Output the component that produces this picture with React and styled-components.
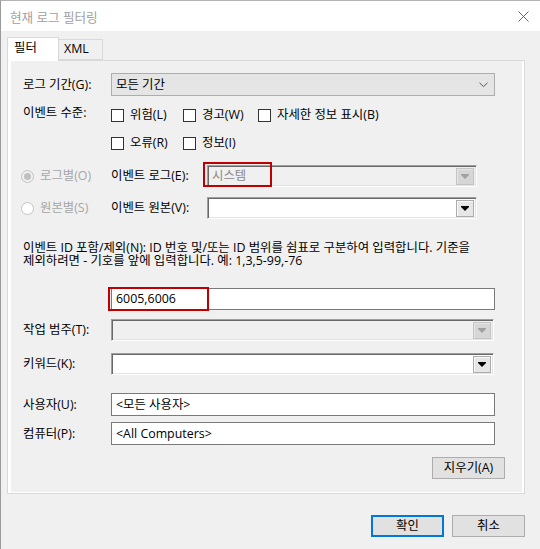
import React from "react";
import styled, { createGlobalStyle, css } from "styled-components";

const GlobalStyle = createGlobalStyle`
  html, body {
    margin: 0;
    padding: 0;
    background: #f0f0f0;
  }
  body {
    font-family: "Open Sans", "Noto Sans CJK KR", sans-serif;
    font-size: 12.4px;
    color: #000;
  }
  * {
    box-sizing: border-box;
  }
`;

const Window = styled.div`
  width: 540px;
  height: 549px;
  border-left: 1px solid #9a9a9a;
  border-top: 1px solid #b4b4b4;
  background: #f0f0f0;
  display: flex;
  flex-direction: column;
  overflow: hidden;
`;

const TitleBar = styled.div`
  height: 30px;
  background: #fff;
  display: flex;
  align-items: center;
  justify-content: space-between;
  padding: 0 8px 0 9px;
  color: #a0a0a0;
  font-size: 12.6px;
`;

const CloseButton = styled.div`
  width: 18px;
  height: 18px;
  display: flex;
  align-items: center;
  justify-content: center;
  svg {
    display: block;
  }
`;

const Body = styled.div`
  flex: 1;
  display: flex;
  flex-direction: column;
  padding: 6px 0 0 6px;
`;

const TabStrip = styled.div`
  display: flex;
  align-items: flex-end;
  height: 23px;
  position: relative;
  z-index: 1;
`;

const Tab = styled.div`
  height: ${({ $active }) => ($active ? "24px" : "21px")};
  width: ${({ $w }) => $w}px;
  border: 1px solid #d9d9d9;
  border-bottom: ${({ $active }) => ($active ? "none" : "1px solid #d9d9d9")};
  background: ${({ $active }) => ($active ? "#fff" : "#f0f0f0")};
  margin-bottom: ${({ $active }) => ($active ? "-1px" : "0")};
  margin-left: ${({ $active }) => ($active ? "0" : "-1px")};
  padding: ${({ $active }) => ($active ? "2px 0 0 6px" : "1px 0 0 5px")};
  line-height: 16px;
`;

const Panel = styled.div`
  width: 518px;
  height: 434px;
  border: 1px solid #d9d9d9;
  background: #fff;
  padding: 0 2px 1px 3px;
`;

const Page = styled.div`
  height: 100%;
  background: #f0f0f0;
  display: flex;
  flex-direction: column;
  padding: 12px 0 0 12px;
`;

const Row = styled.div`
  display: flex;
  align-items: ${({ $align }) => $align || "center"};
  margin-top: ${({ $mt }) => $mt || 0}px;
`;

const Label = styled.div`
  width: ${({ $w }) => $w || 88}px;
  flex-shrink: 0;
  line-height: 16px;
  white-space: nowrap;
  color: ${({ $disabled }) => ($disabled ? "#a6a6a6" : "#000")};
`;

const SelectBox = styled.div`
  width: 384px;
  height: 23px;
  background: #e5e5e5;
  border: 1px solid #adadad;
  display: flex;
  align-items: center;
  justify-content: space-between;
  padding: 0 6px 0 4px;
  line-height: 16px;
`;

const sunken = css`
  border: 1px solid;
  border-color: #a0a0a0 #ffffff #ffffff #a0a0a0;
  box-shadow: inset 1px 1px 0 #696969, inset -1px -1px 0 #e3e3e3;
`;

const Combo = styled.div`
  position: relative;
  width: ${({ $w }) => $w}px;
  height: 22px;
  ${sunken};
  background: ${({ $disabled }) => ($disabled ? "#f0f0f0" : "#fff")};
  display: flex;
  align-items: center;
  justify-content: space-between;
  padding: 0 2px 0 4px;
  line-height: 16px;
  color: ${({ $disabled }) => ($disabled ? "#8a8a8a" : "#000")};
`;

const DropButton = styled.div`
  width: 18px;
  height: 17px;
  border: 1px solid ${({ $disabled }) => ($disabled ? "#c4c4c4" : "#acacac")};
  background: ${({ $disabled }) => ($disabled ? "#d6d6d6" : "#e6e6e6")};
  box-shadow: inset 1px 1px 0 ${({ $disabled }) => ($disabled ? "#e4e4e4" : "#f8f8f8")};
  display: flex;
  align-items: center;
  justify-content: center;
  padding-top: 1px;
`;

const Arrow = styled.div`
  width: 0;
  height: 0;
  border-left: 4px solid transparent;
  border-right: 4px solid transparent;
  border-top: 4px solid ${({ $disabled }) => ($disabled ? "#a0a0a0" : "#000")};
  position: relative;
  &::before {
    content: "";
    position: absolute;
    left: -4px;
    top: -5px;
    width: 8px;
    height: 1px;
    background: ${({ $disabled }) => ($disabled ? "#a0a0a0" : "#000")};
  }
`;

const Highlight = styled.div`
  position: absolute;
  left: -5px;
  top: -4px;
  width: ${({ $w }) => $w}px;
  height: ${({ $h }) => $h}px;
  border: 2px solid #c00000;
  pointer-events: none;
`;

const TextBox = styled.div`
  position: relative;
  width: 384px;
  height: ${({ $h }) => $h || 23}px;
  background: #fff;
  border: 1px solid #7a7a7a;
  display: flex;
  align-items: center;
  padding: 0 4px;
  line-height: 16px;
`;

const LevelBlock = styled.div`
  display: grid;
  grid-template-columns: 72px 75px auto;
  row-gap: 8px;
`;

const CheckItem = styled.label`
  display: flex;
  align-items: center;
  height: 20px;
  gap: 6px;
  line-height: 16px;
  white-space: nowrap;
`;

const CheckBox = styled.span`
  width: 13px;
  height: 13px;
  border: 1px solid #333;
  background: #fff;
  flex-shrink: 0;
`;

const RadioCell = styled.div`
  width: 100px;
  margin-left: -12px;
  display: flex;
  align-items: center;
  gap: 6px;
  padding-left: 10px;
  flex-shrink: 0;
`;

const Radio = styled.span`
  width: 13px;
  height: 13px;
  border-radius: 50%;
  border: 1px solid #c4c4c4;
  background: ${({ $checked }) => ($checked ? "#f0f0f0" : "#fff")};
  display: flex;
  align-items: center;
  justify-content: center;
  flex-shrink: 0;
  &::after {
    content: "";
    display: ${({ $checked }) => ($checked ? "block" : "none")};
    width: 7px;
    height: 7px;
    border-radius: 50%;
    background: #c0c0c0;
  }
`;

const Description = styled.div`
  margin-top: ${({ $mt }) => $mt}px;
  width: 490px;
  white-space: nowrap;
`;

const DescLine = styled.div`
  height: 13px;
  line-height: 13px;
`;

const Button = styled.div`
  width: 73px;
  height: 22px;
  background: #e1e1e1;
  border: ${({ $primary }) => ($primary ? "2px solid #0078d7" : "1px solid #adadad")};
  display: flex;
  align-items: center;
  justify-content: center;
  line-height: 16px;
`;

const ClearRow = styled.div`
  display: flex;
  justify-content: flex-end;
  padding-right: 17px;
  margin-top: 12px;
`;

const Footer = styled.div`
  display: flex;
  justify-content: flex-end;
  gap: 8px;
  padding-right: 15px;
  margin-top: 21px;
`;

const Chevron = () => (
  <svg width="9" height="6" viewBox="0 0 9 6">
    <path d="M0.5 0.8 L4.5 4.6 L8.5 0.8" fill="none" stroke="#444" strokeWidth="0.9" />
  </svg>
);

export default function App() {
  return (
    <>
      <GlobalStyle />
      <Window>
        <TitleBar>
          <span>현재 로그 필터링</span>
          <CloseButton>
            <svg width="11" height="11" viewBox="0 0 11 11">
              <path d="M0.5 0.5 L10.5 10.5 M10.5 0.5 L0.5 10.5" stroke="#666" strokeWidth="1" />
            </svg>
          </CloseButton>
        </TitleBar>
        <Body>
          <TabStrip>
            <Tab $active $w={52}>필터</Tab>
            <Tab $w={45}>XML</Tab>
          </TabStrip>
          <Panel>
            <Page>
              <Row>
                <Label>로그 기간(G):</Label>
                <SelectBox>
                  <span>모든 기간</span>
                  <Chevron />
                </SelectBox>
              </Row>

              <Row $align="flex-start" $mt={9}>
                <Label>이벤트 수준:</Label>
                <LevelBlock>
                  <CheckItem><CheckBox />위험(L)</CheckItem>
                  <CheckItem><CheckBox />경고(W)</CheckItem>
                  <CheckItem><CheckBox />자세한 정보 표시(B)</CheckItem>
                  <CheckItem><CheckBox />오류(R)</CheckItem>
                  <CheckItem><CheckBox />정보(I)</CheckItem>
                </LevelBlock>
              </Row>

              <Row $mt={12}>
                <RadioCell>
                  <Radio $checked />
                  <Label $disabled $w={60}>로그별(O)</Label>
                </RadioCell>
                <Label $w={96}>이벤트 로그(E):</Label>
                <Combo $w={270} $disabled>
                  <span>시스템</span>
                  <DropButton $disabled>
                    <Arrow $disabled />
                  </DropButton>
                  <Highlight $w={69} $h={25} />
                </Combo>
              </Row>

              <Row $mt={10}>
                <RadioCell>
                  <Radio />
                  <Label $disabled $w={60}>원본별(S)</Label>
                </RadioCell>
                <Label $w={96}>이벤트 원본(V):</Label>
                <Combo $w={270}>
                  <span />
                  <DropButton>
                    <Arrow />
                  </DropButton>
                </Combo>
              </Row>

              <Description $mt={22}>
                <DescLine>이벤트 ID 포함/제외(N): ID 번호 및/또는 ID 범위를 쉼표로 구분하여 입력합니다. 기준을</DescLine>
                <DescLine>제외하려면 - 기호를 앞에 입력합니다. 예: 1,3,5-99,-76</DescLine>
              </Description>

              <Row $mt={21}>
                <Label />
                <TextBox $h={22}>
                  6005,6006
                  <Highlight $w={101} $h={24} style={{ left: -4, top: -2 }} />
                </TextBox>
              </Row>

              <Row $mt={9}>
                <Label>작업 범주(T):</Label>
                <Combo $w={383} $disabled>
                  <span />
                  <DropButton $disabled>
                    <Arrow $disabled />
                  </DropButton>
                </Combo>
              </Row>

              <Row $mt={12}>
                <Label>키워드(K):</Label>
                <Combo $w={383}>
                  <span />
                  <DropButton>
                    <Arrow />
                  </DropButton>
                </Combo>
              </Row>

              <Row $mt={18}>
                <Label>사용자(U):</Label>
                <TextBox>&lt;모든 사용자&gt;</TextBox>
              </Row>

              <Row $mt={6}>
                <Label>컴퓨터(P):</Label>
                <TextBox>&lt;All Computers&gt;</TextBox>
              </Row>

              <ClearRow>
                <Button>지우기(A)</Button>
              </ClearRow>
            </Page>
          </Panel>
          <Footer>
            <Button $primary>확인</Button>
            <Button>취소</Button>
          </Footer>
        </Body>
      </Window>
    </>
  );
}
